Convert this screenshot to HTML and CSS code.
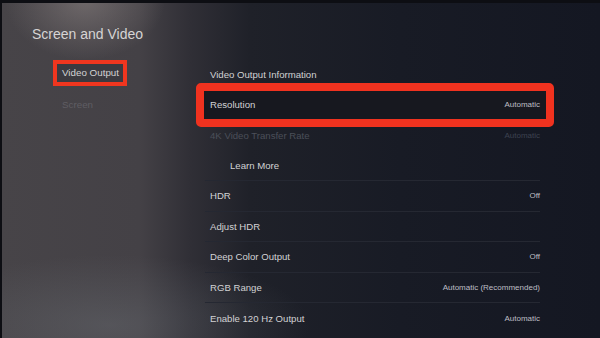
FILE: index.html
```html
<!DOCTYPE html>
<html>
<head>
  <meta charset="UTF-8">
  <title>Screen and Video</title>
  <link rel="stylesheet" href="styles.css">
</head>
<body>
  <div class="screen">
    <div class="sidebar">
      <h1>Screen and Video</h1>
      <ul class="nav">
        <li class="nav-item marked">Video Output</li>
        <li class="nav-item dim">Screen</li>
      </ul>
    </div>

    <ul class="settings">
      <li class="row"><span>Video Output Information</span></li>
      <li class="row marked"><span>Resolution</span><span class="value">Automatic</span></li>
      <li class="row dim"><span>4K Video Transfer Rate</span><span class="value">Automatic</span></li>
      <li class="row sub line"><span>Learn More</span></li>
      <li class="row line"><span>HDR</span><span class="value">Off</span></li>
      <li class="row line"><span>Adjust HDR</span></li>
      <li class="row line"><span>Deep Color Output</span><span class="value">Off</span></li>
      <li class="row line"><span>RGB Range</span><span class="value">Automatic (Recommended)</span></li>
      <li class="row"><span>Enable 120 Hz Output</span><span class="value">Automatic</span></li>
    </ul>
  </div>
</body>
</html>
```

FILE: styles.css
```css
body {
  margin: 0;
  font-family: 'Liberation Sans', Arial, sans-serif;
  color: #d2d2d4;
  background-color: #151823;
}
ul {
  list-style: none;
  margin: 0;
  padding: 0;
}
.screen {
  width: 600px;
  height: 338px;
  overflow: hidden;
  display: grid;
  grid-template-columns: 190px 1fr;
  box-shadow: inset 2px 3px 0 #0d0e13;
  background:
    radial-gradient(ellipse 80px 60px at 85px 0, rgba(160, 150, 148, 0.45), transparent),
    radial-gradient(ellipse 200px 70px at 110px 325px, rgba(115, 120, 126, 0.35), transparent),
    linear-gradient(90deg, #474448 0, #444146 140px, #302f36 190px, #1f2129 250px, #181b25 400px, #141722 600px);
}
.sidebar {
  padding: 24px 0 0 32px;
}
h1 {
  margin: 0;
  font-size: 14px;
  font-weight: normal;
  line-height: 20px;
  color: #d6d4d4;
}
.nav {
  margin: 16px 0 0 21px;
  display: flex;
  flex-direction: column;
  align-items: flex-start;
  gap: 6px;
}
.nav-item {
  font-size: 9.8px;
  line-height: 18px;
  padding: 0 4px 0 5px;
  border: 4px solid transparent;
}
.nav-item.marked {
  border-color: #f0361f;
  background-color: #3c3a40;
}
.nav-item.dim {
  color: #5f5d63;
}
.settings {
  margin-left: 15px;
  width: 335px;
  padding-top: 59px;
}
.row {
  position: relative;
  height: 30.5px;
  box-sizing: border-box;
  display: flex;
  justify-content: space-between;
  align-items: center;
  padding-left: 5px;
  font-size: 9.6px;
}
.row.line {
  border-bottom: 1px solid #252832;
}
.row.sub {
  padding-left: 25px;
}
.row.dim {
  color: #4b4f59;
}
.row.dim .value {
  color: #3d4250;
}
.row.marked {
  z-index: 0;
}
.row.marked::before {
  content: "";
  position: absolute;
  z-index: -1;
  top: -7px;
  bottom: -7px;
  left: -9px;
  right: -14px;
  border: 8px solid #f0321f;
  border-radius: 5px;
  background-color: #17181f;
}
.value {
  font-size: 8px;
  color: #bebec4;
}
```
